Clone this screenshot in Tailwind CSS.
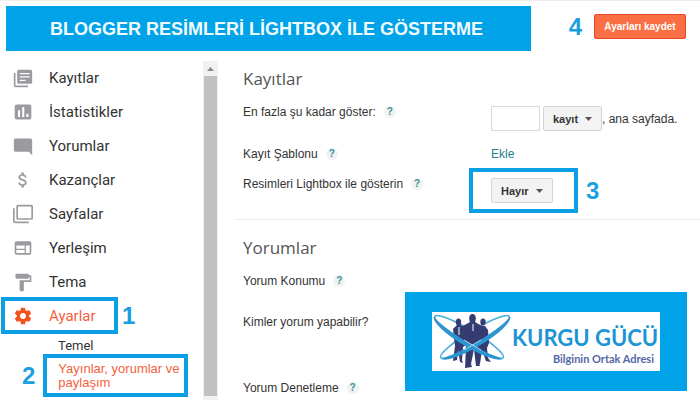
<!DOCTYPE html>
<html lang="tr">
<head>
    <meta charset="UTF-8">
    <meta name="viewport" content="width=device-width, initial-scale=1.0">
    <title>Blogger Ayarlar</title>

    <script src="https://cdn.jsdelivr.net/npm/@tailwindcss/browser@4"></script>
</head>
<body class="min-h-screen flex flex-col bg-white border-t border-[#eeeeee] text-[#333333] text-[12px] leading-[18px] font-['Liberation_Sans',Arial,sans-serif]">

    <!-- Header -->
    <header class="flex items-start pt-[5px] pl-1.5 pr-3.5 pb-2.5">
        <h1 class="flex-1 h-[45px] flex items-center pl-11 bg-[#00a2e8] text-[#f0fbff] text-[18px] font-bold whitespace-nowrap">BLOGGER RESİMLERİ LİGHTBOX İLE GÖSTERME</h1>
        <div class="flex items-center gap-3 pl-[38px] pt-2">
            <span class="text-2xl leading-6 font-bold text-[#1c9fe0]">4</span>
            <button type="button" class="w-[92px] h-[25px] rounded-xs border border-[#e8491f] bg-[#fb6f45] text-white text-[10px] leading-4 font-bold whitespace-nowrap">Ayarları kaydet</button>
        </div>
    </header>

    <div class="flex flex-1">
        <!-- Sidebar -->
        <nav class="w-[203px] shrink-0 font-[Roboto,sans-serif] text-[15px] text-[#333333]">
            <ul>
                <li><a href="#" class="flex items-center h-[34px] pl-[13px] gap-4">
                    <svg class="size-5 text-[#9c9a9e]" viewBox="0 0 24 24" fill="currentColor"><path d="M3 6H1v15c0 1.100.9 2 2 2h15v-2H3z"/><path fill-rule="evenodd" d="M7 2h14a2 2 0 0 1 2 2v13a2 2 0 0 1-2 2H7a2 2 0 0 1-2-2V4c0-1.100.9-2 2-2zm1 4v1.500h12V6zm0 4v1.500h12V10zm0 4v1.500h7V14z"/></svg>
                    Kayıtlar</a></li>
                <li><a href="#" class="flex items-center h-[34px] pl-[13px] gap-4">
                    <svg class="size-5 text-[#9c9a9e]" viewBox="0 0 24 24" fill="currentColor"><path fill-rule="evenodd" d="M4.500 3h15A2.500 2.500 0 0 1 22 5.500v13a2.500 2.500 0 0 1-2.500 2.500h-15A2.500 2.500 0 0 1 2 18.500v-13A2.500 2.500 0 0 1 4.500 3zM6 10v8h2.500v-8zm5-4v12h2.500V6zm5 8v4h2.500v-4z"/></svg>
                    İstatistikler</a></li>
                <li><a href="#" class="flex items-center h-[34px] pl-[13px] gap-4">
                    <svg class="size-5 text-[#9c9a9e]" viewBox="0 0 24 24" fill="currentColor"><path d="M3 3h18a2 2 0 0 1 2 2v18l-4-4H3a2 2 0 0 1-2-2V5c0-1.100.9-2 2-2z"/></svg>
                    Yorumlar</a></li>
                <li><a href="#" class="flex items-center h-[34px] pl-[13px] gap-4">
                    <svg class="size-5 text-[#9c9a9e]" viewBox="0 0 24 24" fill="currentColor"><path d="M11.800 10.900c-2.270-.59-3-1.200-3-2.150 0-1.090 1.010-1.850 2.700-1.850 1.780 0 2.440.85 2.500 2.100h2.210c-.07-1.720-1.120-3.300-3.210-3.810V3h-3v2.160c-1.940.42-3.500 1.680-3.500 3.610 0 2.310 1.910 3.460 4.700 4.130 2.500.6 3 1.480 3 2.410 0 .69-.49 1.790-2.700 1.790-2.060 0-2.870-.92-2.980-2.100h-2.200c.12 2.190 1.760 3.420 3.680 3.830V21h3v-2.150c1.950-.37 3.500-1.500 3.500-3.550 0-2.840-2.430-3.810-4.700-4.400z"/></svg>
                    Kazançlar</a></li>
                <li><a href="#" class="flex items-center h-[34px] pl-[13px] gap-4">
                    <svg class="size-5 text-[#9c9a9e]" viewBox="0 0 24 24" fill="none" stroke="currentColor" stroke-width="2"><rect x="5" y="2" width="18" height="16" rx="1"/><path d="M1 5v15a2 2 0 0 0 2 2h16"/></svg>
                    Sayfalar</a></li>
                <li><a href="#" class="flex items-center h-[34px] pl-[13px] gap-4">
                    <svg class="size-5 text-[#9c9a9e]" viewBox="0 0 24 24" fill="currentColor"><path fill-rule="evenodd" d="M4 4h16a2 2 0 0 1 2 2v12a2 2 0 0 1-2 2H4a2 2 0 0 1-2-2V6c0-1.100.9-2 2-2zm0 5v4h10V9zm0 5.500V18h10v-3.500zM15.500 9v9H20V9z"/></svg>
                    Yerleşim</a></li>
                <li><a href="#" class="flex items-center h-[34px] pl-[13px] gap-4">
                    <svg class="size-5 text-[#9c9a9e]" viewBox="0 0 24 24" fill="currentColor"><path d="M4 2h14a1 1 0 0 1 1 1v1h3v8h-9v10a1 1 0 0 1-1 1H9a1 1 0 0 1-1-1V10h12V6h-1v1a1 1 0 0 1-1 1H4a1 1 0 0 1-1-1V3a1 1 0 0 1 1-1z"/></svg>
                    Tema</a></li>
                <li class="-mt-0.5">
                    <div class="flex items-center gap-1 pl-px">
                        <a href="#" class="flex items-center w-[117px] h-[37px] pl-2 gap-4 border-4 border-[#0ba0e4] text-[#f4613c]">
                            <svg class="size-5 text-[#f7511f]" viewBox="0 0 24 24" fill="currentColor"><path fill-rule="evenodd" d="M19.430 12.980c.04-.32.07-.64.07-.98s-.03-.66-.07-.98l2.110-1.650c.19-.15.24-.42.12-.64l-2-3.460c-.12-.22-.39-.3-.61-.22l-2.490 1c-.52-.4-1.080-.73-1.690-.98l-.38-2.650A.49.49 0 0 0 14 2h-4c-.25 0-.46.18-.49.42l-.38 2.650c-.61.25-1.170.59-1.690.98l-2.490-1c-.23-.09-.49 0-.61.22l-2 3.460c-.13.22-.07.49.12.64l2.110 1.650c-.04.32-.07.65-.07.98s.03.66.07.98l-2.110 1.650c-.19.15-.24.42-.12.64l2 3.460c.12.22.39.3.61.22l2.490-1c.52.4 1.080.73 1.690.98l.38 2.650c.03.24.24.42.49.42h4c.25 0 .46-.18.49-.42l.38-2.650c.61-.25 1.170-.59 1.690-.98l2.490 1c.23.09.49 0 .61-.22l2-3.460c.12-.22.07-.49-.12-.64zM12 15.500a3.500 3.500 0 1 1 0-7 3.500 3.500 0 0 1 0 7z"/></svg>
                            Ayarlar</a>
                        <span class="font-['Liberation_Sans',Arial,sans-serif] text-2xl leading-6 font-bold text-[#1c9fe0]">1</span>
                    </div>
                    <ul class="font-['Liberation_Sans',Arial,sans-serif] text-[13px]">
                        <li><a href="#" class="flex items-center h-5 pt-1 pl-[58px] leading-4 font-[Roboto,sans-serif]">Temel</a></li>
                        <li class="flex items-center gap-2 pl-[22px]">
                            <span class="text-2xl leading-6 font-bold text-[#1c9fe0]">2</span>
                            <a href="#" class="flex items-center w-[145px] h-[43px] pl-[11px] border-4 border-[#0ba0e4] leading-[14px] text-[#f4613c]">Yayınlar, yorumlar ve<br>paylaşım</a>
                        </li>
                    </ul>
                </li>
            </ul>
        </nav>

        <!-- Scrollbar -->
        <div class="w-[15px] shrink-0 flex flex-col bg-[#f1f1f1]">
            <div class="h-[15px] flex items-center justify-center">
                <svg class="w-[7px] h-1" viewBox="0 0 7 4" fill="#8a8a8a"><path d="M0 4l3.500-4L7 4z"/></svg>
            </div>
            <div class="flex-1 mx-px mb-1 bg-[#c1c1c1]"></div>
        </div>

        <!-- Settings -->
        <main class="flex-1 pl-[17px]">
            <section class="pl-2 pb-1.5 border-b border-[#ececec]">
                <h2 class="h-[42px] pt-[6px] font-['Open_Sans',sans-serif] text-[17px] leading-6 text-[#555555]">Kayıtlar</h2>
                <div class="flex items-start h-[42px]">
                    <label for="post-count" class="w-[248px] flex items-center gap-2">En fazla şu kadar göster:
                        <span class="size-3 rounded-full bg-[#f1f3f3] text-center text-[10px] leading-3 font-bold text-[#3d9199]">?</span></label>
                    <div class="flex items-center pt-[3px]">
                        <input id="post-count" type="text" class="w-[49px] h-[25px] mr-[3px] px-1 border border-[#d9d9d9]">
                        <div class="relative">
                            <select aria-label="Birim" class="appearance-none block w-[59px] h-[25px] pl-[9px] rounded-xs border border-[#d5d5d5] bg-[#f3f3f3] text-[11px] font-bold">
                                <option>kayıt</option>
                                <option>gün</option>
                            </select>
                            <svg class="absolute right-2.5 top-[11px] w-[7px] h-1 pointer-events-none" viewBox="0 0 7 4" fill="#555555"><path d="M0 0h7L3.500 4z"/></svg>
                        </div>
                        <span>, ana sayfada.</span>
                    </div>
                </div>
                <div class="flex items-start h-[23px]">
                    <div class="w-[248px] flex items-center gap-2">Kayıt Şablonu
                        <span class="size-3 rounded-full bg-[#f1f3f3] text-center text-[10px] leading-3 font-bold text-[#3d9199]">?</span></div>
                    <a href="#" class="text-[#1f7f8c]">Ekle</a>
                </div>
                <div class="flex items-start">
                    <label for="lightbox" class="w-[226px] pt-[7px] flex items-center gap-2">Resimleri Lightbox ile gösterin
                        <span class="size-3 rounded-full bg-[#f1f3f3] text-center text-[10px] leading-3 font-bold text-[#3d9199]">?</span></label>
                    <div class="flex items-center gap-2">
                        <div class="w-[109px] h-[45px] flex items-center pl-[18px] border-4 border-[#0ba0e4]">
                            <div class="relative">
                                <select id="lightbox" class="appearance-none block w-[62px] h-[25px] pl-[9px] rounded-xs border border-[#d5d5d5] bg-[#f3f3f3] text-[11px] font-bold">
                                    <option>Hayır</option>
                                    <option>Evet</option>
                                </select>
                                <svg class="absolute right-2.5 top-[11px] w-[7px] h-1 pointer-events-none" viewBox="0 0 7 4" fill="#555555"><path d="M0 0h7L3.500 4z"/></svg>
                            </div>
                        </div>
                        <span class="text-2xl leading-6 font-bold text-[#1c9fe0]">3</span>
                    </div>
                </div>
            </section>

            <section class="pl-2 pr-[13px] pt-4">
                <h2 class="h-9 font-['Open_Sans',sans-serif] text-[17px] leading-6 text-[#555555]">Yorumlar</h2>
                <div class="flex">
                    <div class="w-[162px] shrink-0">
                        <div class="flex items-center gap-2 mb-[23px]">Yorum Konumu
                            <span class="size-3 rounded-full bg-[#f1f3f3] text-center text-[10px] leading-3 font-bold text-[#3d9199]">?</span></div>
                        <div class="mb-12">Kimler yorum yapabilir?</div>
                        <div class="flex items-center gap-2">Yorum Denetleme
                            <span class="size-3 rounded-full bg-[#f1f3f3] text-center text-[10px] leading-3 font-bold text-[#3d9199]">?</span></div>
                    </div>

                    <!-- Site logo -->
                    <div class="flex-1 h-[99px] mt-5 flex items-center justify-center bg-[#00a2e8]">
                        <div class="w-[228px] h-[59px] flex bg-white">
                            <svg class="w-20 h-[59px] shrink-0" viewBox="0 0 80 59" fill="none">
                                <!-- rear halves of the rings -->
                                <g stroke="#4aaede" stroke-width="1.500">
                                    <path transform="translate(37 25) rotate(31)" d="M-40 0A40 7 0 0 1 40 0"/>
                                    <path transform="translate(43 25) rotate(-31)" d="M-40 0A40 7 0 0 1 40 0"/>
                                </g>
                                <!-- people -->
                                <g fill="#353c72">
                                    <ellipse cx="26.500" cy="10" rx="2.700" ry="3.600"/>
                                    <path d="M25 13h4l5 4v16l-3 2-1 13 1 3-3-1-2-12-1 10-4 1 2-15-1-8-1-9z"/>
                                    <ellipse cx="51" cy="10" rx="2.700" ry="3.600"/>
                                    <path d="M48 14h5l3 4 1 13-2 5 1 10 3 4-5-1-4-11-2 14h-3l1-17-1-18z"/>
                                    <ellipse cx="40.500" cy="6.500" rx="3.300" ry="4.500"/>
                                    <path d="M38 10h5l7 4 1 17-3 2-1 18 1 3h-4l-2-17-3 15 1 3-7 1 1-22-4-3-1-16z"/>
                                </g>
                                <path d="M27 15v8M41 12v7" stroke="#ffffff" stroke-width="1"/>
                                <!-- front halves, thicker towards the middle -->
                                <g fill="#2d96d2" stroke="#2d96d2" stroke-width="1.500">
                                    <path transform="translate(37 25) rotate(31)" d="M-40 0A40 9 0 0 0 40 0A40 6 0 0 1-40 0z"/>
                                    <path transform="translate(43 25) rotate(-31)" d="M-40 0A40 9 0 0 0 40 0A40 6 0 0 1-40 0z"/>
                                </g>
                                <path d="M32 28l17 10M49 28L32 38" stroke="#a5ddf5" stroke-width="1"/>
                            </svg>
                            <div class="flex-1 pt-3.5 font-[Lato,sans-serif] font-bold whitespace-nowrap">
                                <div class="text-[22px] leading-6 text-[#1c94d6]">KURGU GÜCÜ</div>
                                <div class="pr-1.5 text-right text-[11px] leading-[18px] text-[#5566a6]">Bilginin Ortak Adresi</div>
                            </div>
                        </div>
                    </div>
                </div>
            </section>
        </main>
    </div>

</body>
</html>
